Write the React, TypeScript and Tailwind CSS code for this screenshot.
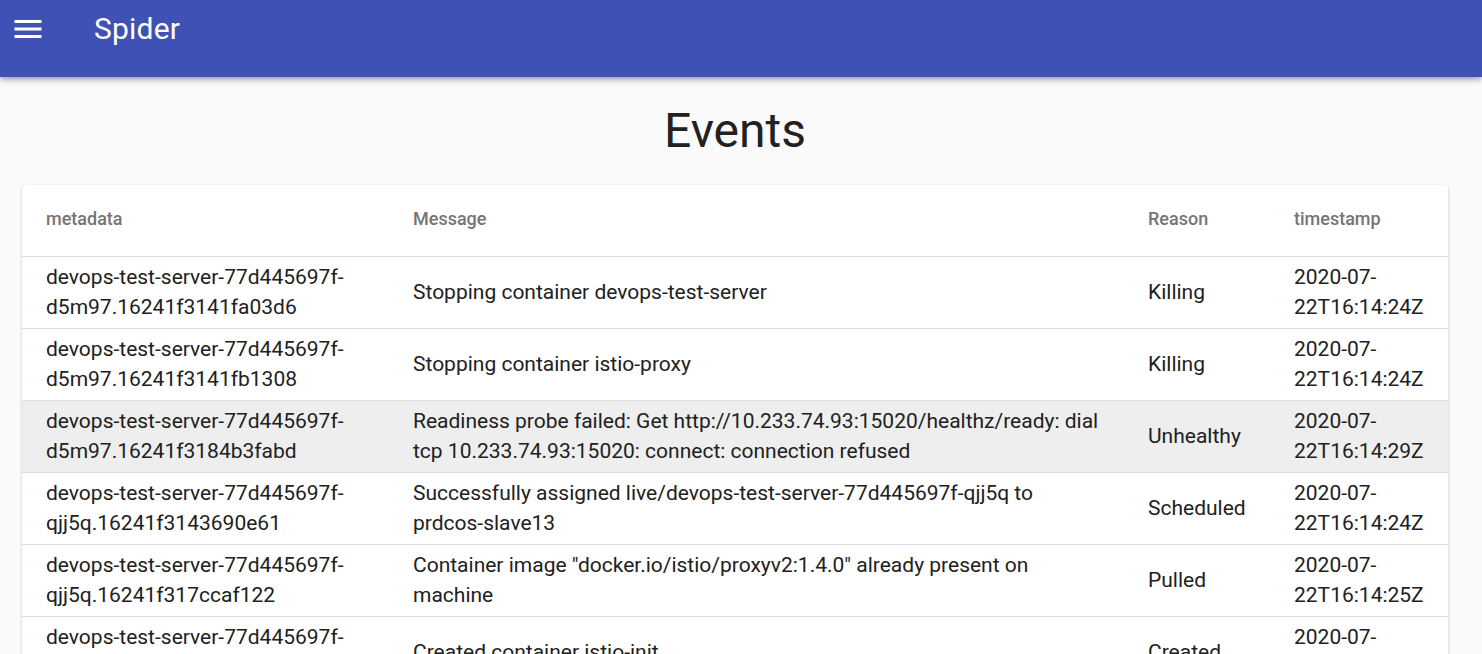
import React from 'react';

type EventRow = {
  metadata: string;
  message: string;
  reason: string;
  timestamp: string;
};

const events: EventRow[] = [
  {
    metadata: 'devops-test-server-77d445697f-d5m97.16241f3141fa03d6',
    message: 'Stopping container devops-test-server',
    reason: 'Killing',
    timestamp: '2020-07-22T16:14:24Z',
  },
  {
    metadata: 'devops-test-server-77d445697f-d5m97.16241f3141fb1308',
    message: 'Stopping container istio-proxy',
    reason: 'Killing',
    timestamp: '2020-07-22T16:14:24Z',
  },
  {
    metadata: 'devops-test-server-77d445697f-d5m97.16241f3184b3fabd',
    message:
      'Readiness probe failed: Get http://10.233.74.93:15020/healthz/ready: dial tcp 10.233.74.93:15020: connect: connection refused',
    reason: 'Unhealthy',
    timestamp: '2020-07-22T16:14:29Z',
  },
  {
    metadata: 'devops-test-server-77d445697f-qjj5q.16241f3143690e61',
    message: 'Successfully assigned live/devops-test-server-77d445697f-qjj5q to prdcos-slave13',
    reason: 'Scheduled',
    timestamp: '2020-07-22T16:14:24Z',
  },
  {
    metadata: 'devops-test-server-77d445697f-qjj5q.16241f317ccaf122',
    message: 'Container image "docker.io/istio/proxyv2:1.4.0" already present on machine',
    reason: 'Pulled',
    timestamp: '2020-07-22T16:14:25Z',
  },
  {
    metadata: 'devops-test-server-77d445697f-qjj5q.16241f3180e2a4b9',
    message: 'Created container istio-init',
    reason: 'Created',
    timestamp: '2020-07-22T16:14:25Z',
  },
];

function MenuIcon() {
  return (
    <svg viewBox="0 0 24 24" className="w-[36px] h-[36px]" fill="currentColor">
      <path d="M3 18h18v-2H3v2zm0-5h18v-2H3v2zm0-7v2h18V6H3z" />
    </svg>
  );
}

export default function App() {
  const hovered = 2;

  return (
    <div className="min-h-screen bg-[#fafafa] font-['Roboto',sans-serif] text-[#212121]">
      {/* App bar */}
      <header className="relative z-10 h-[77px] bg-[#3f51b5] text-white shadow-[0_2px_4px_-1px_rgba(0,0,0,0.2),0_4px_5px_0_rgba(0,0,0,0.14),0_1px_10px_0_rgba(0,0,0,0.12)]">
        <div className="flex h-[57px] items-center pl-[10px]">
          <MenuIcon />
          <h6 className="ml-[48px] text-[30px] font-normal leading-none tracking-[0.2px]">Spider</h6>
        </div>
      </header>

      <main className="pl-[22px] pr-[34px]">
        <div className="flex h-[108px] items-center justify-center">
          <h1 className="text-[48px] font-normal leading-none">Events</h1>
        </div>

        <div className="overflow-hidden rounded-[4px] bg-white shadow-[0_1px_3px_0_rgba(0,0,0,0.2),0_1px_1px_0_rgba(0,0,0,0.14),0_2px_1px_-1px_rgba(0,0,0,0.12)]">
          <table className="w-full table-fixed border-collapse text-left">
            <colgroup>
              <col className="w-[367px]" />
              <col className="w-[735px]" />
              <col className="w-[146px]" />
              <col className="w-[178px]" />
            </colgroup>
            <thead>
              <tr className="h-[71px] border-b border-[#e0e0e0]">
                <th className="pl-6 pr-6 pb-1 text-[18px] font-medium text-[#757575]">metadata</th>
                <th className="pl-6 pr-6 pb-1 text-[18px] font-medium text-[#757575]">Message</th>
                <th className="pl-6 pr-6 pb-1 text-[18px] font-medium text-[#757575]">Reason</th>
                <th className="pl-6 pr-4 pb-1 text-[18px] font-medium text-[#757575]">timestamp</th>
              </tr>
            </thead>
            <tbody>
              {events.map((e, i) => (
                <tr
                  key={e.metadata}
                  className={`h-[72px] border-b border-[#e0e0e0] ${i === hovered ? 'bg-[#eeeeee]' : 'bg-white'}`}
                >
                  <td className="pl-6 pr-6 py-[5px] text-[21px] leading-[30px]">{e.metadata}</td>
                  <td className="pl-6 pr-5 py-[5px] text-[21px] leading-[30px]">{e.message}</td>
                  <td className="pl-6 pr-6 py-[5px] text-[21px] leading-[30px]">{e.reason}</td>
                  <td className="pl-6 pr-4 py-[5px] text-[21px] leading-[30px]">{e.timestamp}</td>
                </tr>
              ))}
            </tbody>
          </table>
        </div>
      </main>
    </div>
  );
}
